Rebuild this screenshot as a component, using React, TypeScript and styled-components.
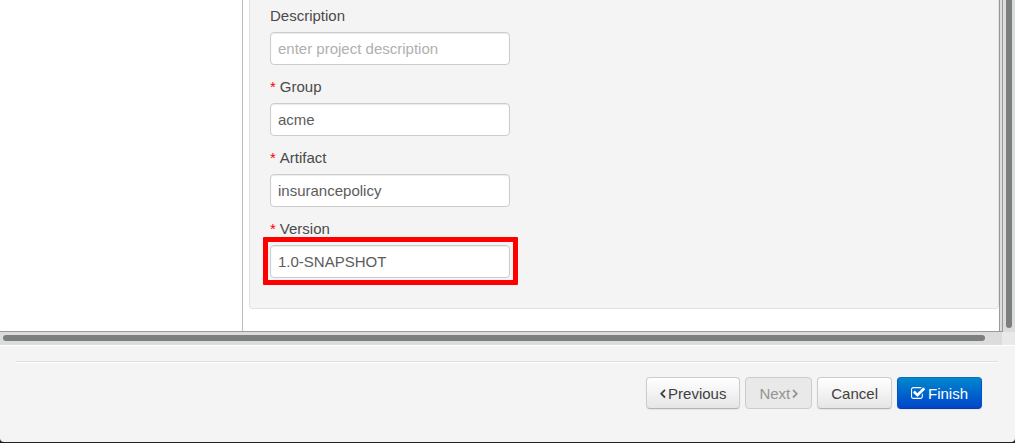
import React from "react";
import styled, { createGlobalStyle, css } from "styled-components";

const GlobalStyle = createGlobalStyle`
  *, *::before, *::after { box-sizing: border-box; }
  body {
    margin: 0;
    background: #222226;
    color: #4a4a4a;
    font: 15px/20px "Liberation Sans", Arial, sans-serif;
  }
`;

const Dialog = styled.main`
  background: #f4f4f4;
  border-radius: 0 0 4px 4px;
  overflow: hidden;
`;

const ScrollArea = styled.div`
  display: grid;
  grid-template-columns: 1fr 13px;
`;

const Viewport = styled.div`
  display: flex;
  background: #dcdcdc;
  border-bottom: 1px solid #999;
`;

const StepList = styled.aside`
  flex: 0 0 243px;
  background: #fff;
  border-right: 1px solid #bbb;
`;

const StepContent = styled.div`
  flex: 1;
  margin-right: 2px;
  padding: 0 0 22px 6px;
  background: #fff;
  border-right: 1px solid #999;
`;

const Well = styled.form`
  padding: 6px 20px 30px;
  background: #f4f4f4;
  border: 1px solid #e1e1e1;
  border-top: 0;
  border-radius: 0 0 4px 4px;
`;

const Field = styled.div`
  display: flex;
  flex-direction: column;
  gap: 6px;
  margin-bottom: 12px;
  &:last-child { margin-bottom: 0; }
`;

const Label = styled.label`
  display: flex;
  gap: 4px;
`;

const Required = styled.span`
  color: #f00;
`;

const InputFrame = styled.div<{ $marked?: boolean }>`
  position: relative;
  width: 240px;
  ${({ $marked }) =>
    $marked &&
    css`
      &::after {
        content: "";
        position: absolute;
        inset: -8px -8px -7px -7px;
        border: 5px solid #f00;
        border-radius: 1px;
        pointer-events: none;
      }
    `}
`;

const TextInput = styled.input`
  display: block;
  width: 100%;
  height: 33px;
  padding: 4px 7px;
  border: 1px solid #ccc;
  border-radius: 4px;
  background: #fff;
  box-shadow: inset 0 1px 1px rgba(0, 0, 0, 0.08);
  color: #5c5c5c;
  font: inherit;
  &::placeholder { color: #b0b0b0; opacity: 1; }
`;

const VerticalTrack = styled.div`
  display: flex;
  padding: 0 3px 4px;
  border-left: 1px solid #999;
  background: #dcdcdc;
`;

const HorizontalTrack = styled.div`
  padding: 3px 17px 4px 3px;
  background: #dcdcdc;
`;

const VerticalThumb = styled.div`
  flex: 1;
  border-radius: 0 0 3px 3px;
  background: #7b7f7e;
`;

const HorizontalThumb = styled.div`
  height: 6px;
  border-radius: 3px;
  background: #7b7f7e;
`;

const ScrollCorner = styled.div`
  background: #e9e9e9;
`;

const Footer = styled.footer`
  padding: 15px 17px 33px 16px;
  border-top: 1px solid #fff;
`;

const Divider = styled.hr`
  margin: 0 0 14px;
  border: 0;
  border-top: 1px solid #ddd;
  border-bottom: 1px solid #fff;
`;

const Actions = styled.div`
  display: flex;
  justify-content: flex-end;
  gap: 5px;
  padding-right: 16px;
`;

const Button = styled.button<{ $primary?: boolean }>`
  display: flex;
  align-items: center;
  justify-content: center;
  gap: 2px;
  height: 32px;
  padding: 2px 13px 0;
  border: 1px solid #ccc;
  border-bottom-color: #b3b3b3;
  border-radius: 4px;
  background: linear-gradient(#fff, #e6e6e6);
  box-shadow: 0 1px 2px rgba(0, 0, 0, 0.06);
  color: #404040;
  font: inherit;
  &:disabled {
    border-color: #ccc;
    background: #e9e9e9;
    box-shadow: none;
    color: #949494;
  }
  ${({ $primary }) =>
    $primary &&
    css`
      gap: 3px;
      border-color: #0570c4 #0450c4 #043cab;
      background: linear-gradient(#0088cc, #0044cc);
      color: #fff;
    `}
`;

const Chevron = ({ next = false }: { next?: boolean }) => (
  <svg width="6" height="10" viewBox="0 0 6 10" fill="none" stroke="currentColor" strokeWidth="1.8" aria-hidden="true">
    <path d={next ? "M1 .9 4.8 4.7 1 8.5" : "M5 .9 1.2 4.7 5 8.5"} />
  </svg>
);

const CheckIcon = () => (
  <svg width="14" height="14" viewBox="0 120 1664 1664" fill="currentColor" aria-hidden="true">
    <path d="M1408 930v318q0 119-84.5 203.5t-203.5 84.5h-832q-119 0-203.5-84.5t-84.5-203.5v-832q0-119 84.5-203.5t203.5-84.5h832q63 0 117 25 15 7 18 23 3 17-9 29l-49 49q-10 10-23 10-3 0-9-2-23-6-45-6h-832q-66 0-113 47t-47 113v832q0 66 47 113t113 47h832q66 0 113-47t47-113v-254q0-13 9-22l64-64q10-10 23-10 6 0 12 3 20 8 20 29zm231-489l-814 814q-24 24-57 24t-57-24l-430-430q-24-24-24-57t24-57l110-110q24-24 57-24t57 24l263 263 647-647q24-24 57-24t57 24l110 110q24 24 24 57t-24 57z" />
  </svg>
);

const fields = [
  { id: "description", label: "Description", value: "", placeholder: "enter project description" },
  { id: "group", label: "Group", value: "acme", required: true },
  { id: "artifact", label: "Artifact", value: "insurancepolicy", required: true },
  { id: "version", label: "Version", value: "1.0-SNAPSHOT", required: true, marked: true },
];

export default function App() {
  return (
    <>
      <GlobalStyle />
      <Dialog>
        <ScrollArea>
          <Viewport>
            <StepList />
            <StepContent>
              <Well>
                {fields.map((f) => (
                  <Field key={f.id}>
                    <Label htmlFor={f.id}>
                      {f.required && <Required>*</Required>}
                      {f.label}
                    </Label>
                    <InputFrame $marked={f.marked}>
                      <TextInput id={f.id} type="text" defaultValue={f.value} placeholder={f.placeholder} />
                    </InputFrame>
                  </Field>
                ))}
              </Well>
            </StepContent>
          </Viewport>
          <VerticalTrack><VerticalThumb /></VerticalTrack>
          <HorizontalTrack><HorizontalThumb /></HorizontalTrack>
          <ScrollCorner />
        </ScrollArea>
        <Footer>
          <Divider />
          <Actions>
            <Button type="button"><Chevron />Previous</Button>
            <Button type="button" disabled>Next<Chevron next /></Button>
            <Button type="button">Cancel</Button>
            <Button type="button" $primary><CheckIcon />Finish</Button>
          </Actions>
        </Footer>
      </Dialog>
    </>
  );
}
